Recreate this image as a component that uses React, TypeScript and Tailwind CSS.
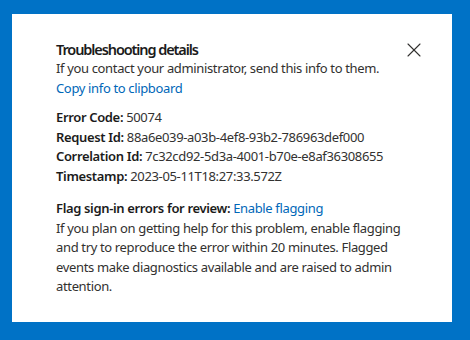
import { X } from "lucide-react";

const details = [
  { label: "Error Code", value: "50074" },
  { label: "Request Id", value: "88a6e039-a03b-4ef8-93b2-786963def000" },
  { label: "Correlation Id", value: "7c32cd92-5d3a-4001-b70e-e8af36308655" },
  { label: "Timestamp", value: "2023-05-11T18:27:33.572Z" },
];

export default function App() {
  return (
    <div className="w-[470px] h-[340px] bg-[#0072c6] pt-[14px] pl-[12px] font-['Noto_Sans',sans-serif] text-[13px] leading-[19.5px] tracking-[-0.35px] text-[#323130]">
      <div className="relative w-[440px] h-[308px] bg-white pt-[25px] pl-[44px] pr-[46px]">
        <button className="absolute left-[390px] top-[24px] p-0 text-[#323130]">
          <X size={24} strokeWidth={1.1} />
        </button>

        <h2 className="text-[14.5px] leading-[20px] font-semibold tracking-[-1.1px] text-[#1b1b1b]">
          Troubleshooting details
        </h2>
        <p>If you contact your administrator, send this info to them.</p>
        <a className="text-[#0067b8] cursor-pointer">Copy info to clipboard</a>

        <div className="mt-[10px]">
          {details.map((d) => (
            <div key={d.label}>
              <span className="font-semibold text-[#1b1b1b]">{d.label}:</span> {d.value}
            </div>
          ))}
        </div>

        <div className="mt-[13px]">
          <span className="font-semibold text-[#1b1b1b]">Flag sign-in errors for review:</span>{" "}
          <a className="text-[#0067b8] cursor-pointer">Enable flagging</a>
          <p>
            If you plan on getting help for this problem, enable flagging and try to reproduce the error within 20
            minutes. Flagged events make diagnostics available and are raised to admin attention.
          </p>
        </div>
      </div>
    </div>
  );
}
